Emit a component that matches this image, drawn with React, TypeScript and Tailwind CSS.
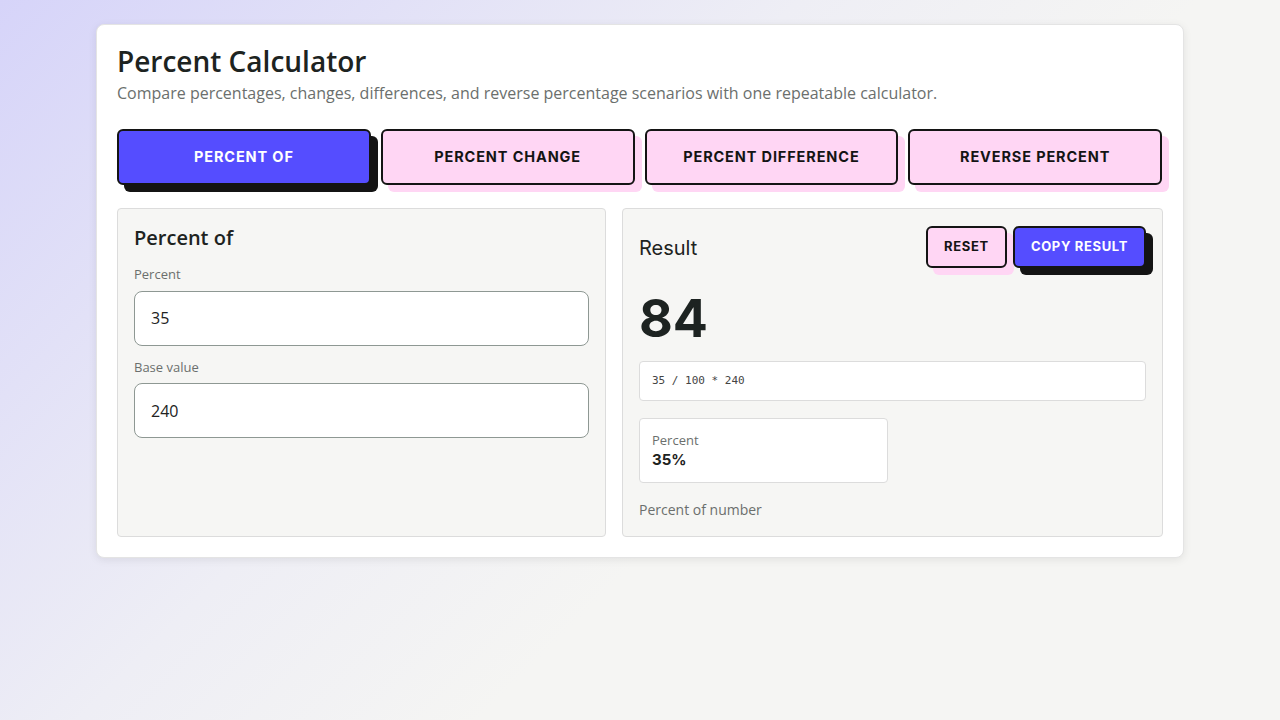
import { useState } from "react";

const tabs = ["Percent of", "Percent change", "Percent difference", "Reverse percent"];

const body = "font-['Open_Sans',sans-serif]";
const ui = "font-['Inter','Liberation_Sans',sans-serif]";

function Field({ label, value }: { label: string; value: string }) {
  return (
    <label className="flex flex-col gap-[6px]">
      <span className="text-[13px] text-[#6b6f6d]">{label}</span>
      <input
        defaultValue={value}
        className={`h-[55px] w-full rounded-lg border border-[#8e9893] bg-white px-4 text-base text-[#222] outline-none ${body}`}
      />
    </label>
  );
}

export default function App() {
  const [active, setActive] = useState(0);

  return (
    <div className={`min-h-screen bg-[linear-gradient(135deg,#d6d4f9_0%,#eeeef5_40%,#f5f5f3_60%)] pt-6 ${body}`}>
      <div className="mx-auto w-[1088px] rounded-lg border border-[#e4e4e4] bg-white px-5 pt-[19px] pb-5 shadow-[0_2px_8px_rgba(0,0,0,0.08)]">
        <h1 className="text-[28px] font-semibold leading-[34px] text-[#1d2321]">Percent Calculator</h1>
        <p className="mt-[5px] text-[16px] leading-5 text-[#6b6f6d]">
          Compare percentages, changes, differences, and reverse percentage scenarios with one repeatable calculator.
        </p>

        <div className="mt-[26px] grid grid-cols-4 gap-[10px] pr-[1px]">
          {tabs.map((t, i) => (
            <button
              key={t}
              onClick={() => setActive(i)}
              className={`h-[56px] rounded-md border-2 border-[#141414] text-[14.5px] font-bold uppercase tracking-[0.06em] ${ui} ${
                i === active
                  ? "bg-[#554dff] text-white shadow-[7px_7px_0_#141414]"
                  : "bg-[#ffd6f4] text-[#141414] shadow-[7px_7px_0_#ffd6f4]"
              }`}
            >
              {t}
            </button>
          ))}
        </div>

        <div className="mt-[23px] grid grid-cols-[489px_1fr] gap-[16px]">
          <section className="rounded border border-[#dcdcdc] bg-[#f6f6f4] px-4 pt-[17px] pb-[95px]">
            <h2 className="text-[20px] font-semibold leading-6 text-[#1d2321]">Percent of</h2>
            <div className="mt-[15px] flex flex-col gap-[12px]">
              <Field label="Percent" value="35" />
              <Field label="Base value" value="240" />
            </div>
          </section>

          <section className="rounded border border-[#dcdcdc] bg-[#f6f6f4] px-4 pt-[17px] pb-4">
            <div className="flex items-center justify-between">
              <h2 className={`mt-[1px] text-[20px] leading-6 text-[#1d2321] ${ui}`}>Result</h2>
              <div className="flex gap-[6px]">
                <button
                  className={`h-[42px] rounded-md border-2 border-[#141414] bg-[#ffd6f4] px-4 text-[13px] font-bold uppercase tracking-[0.05em] text-[#141414] shadow-[7px_7px_0_#ffd6f4] ${ui}`}
                >
                  Reset
                </button>
                <button
                  className={`h-[42px] rounded-md border-2 border-[#141414] bg-[#554dff] px-4 text-[13px] font-bold uppercase tracking-[0.05em] text-white shadow-[7px_7px_0_#141414] ${ui}`}
                >
                  Copy result
                </button>
              </div>
            </div>

            <div className={`mt-[15px] text-[52px] font-bold leading-[72px] text-[#1d2321] ${ui}`}>84</div>

            <div className="mt-[6px] rounded border border-[#dcdcdc] bg-white px-3 py-[11px] font-['DejaVu_Sans_Mono',monospace] text-[11px] leading-4 text-[#444]">
              35 / 100 * 240
            </div>

            <div className="mt-[17px] w-[249px] rounded border border-[#dcdcdc] bg-white px-3 pt-[11px] pb-[12px]">
              <div className="text-[13px] leading-5 text-[#6b6f6d]">Percent</div>
              <div className={`text-[15px] font-bold leading-5 text-[#1d2321] ${ui}`}>35%</div>
            </div>

            <p className="mt-[17px] text-[14px] leading-5 text-[#6b6f6d]">Percent of number</p>
          </section>
        </div>
      </div>
    </div>
  );
}
